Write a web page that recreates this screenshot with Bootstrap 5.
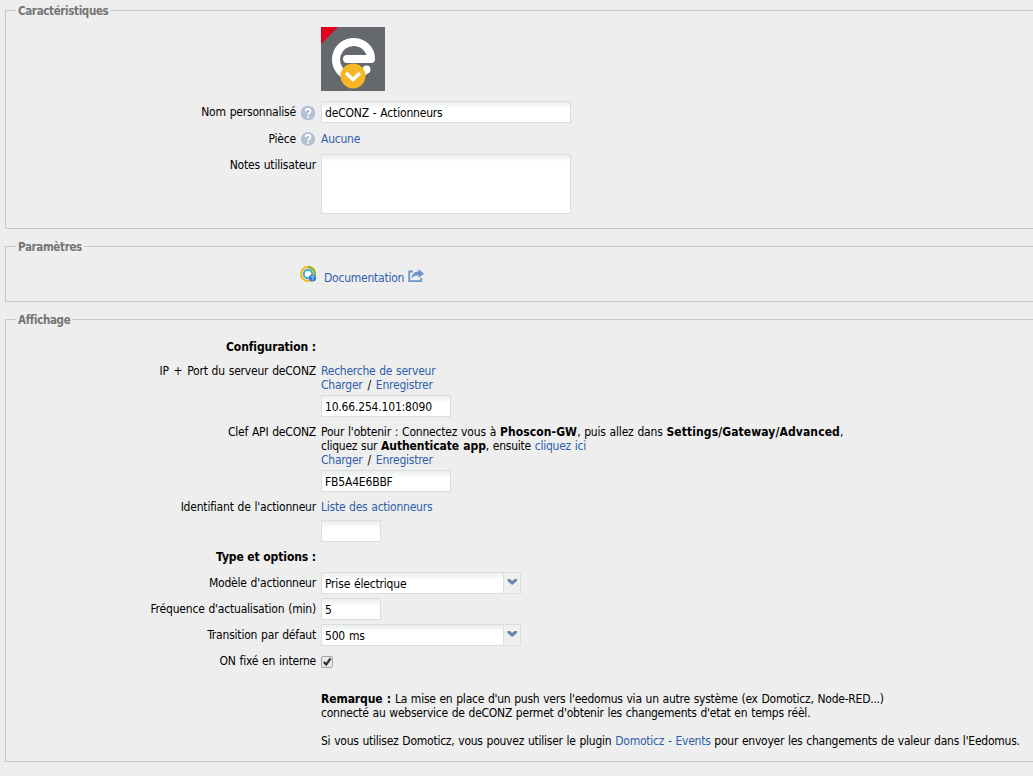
<!DOCTYPE html>
<html lang="fr">
<head>
<meta charset="utf-8">
<meta name="viewport" content="width=device-width, initial-scale=1">
<title>deCONZ - Actionneurs</title>
<link href="https://cdn.jsdelivr.net/npm/bootstrap@5.3.0/dist/css/bootstrap.min.css" rel="stylesheet">
<style>
body{background:#eee;color:#000;font-family:"DejaVu Sans Condensed","DejaVu Sans",sans-serif;font-stretch:condensed;font-size:12px;line-height:14px;letter-spacing:-.24px;word-spacing:.6px;overflow:hidden;padding:3px 0 0 5px;white-space:nowrap}
a{color:#2e5fab;text-decoration:none}
b{letter-spacing:-.08px}
.intro{letter-spacing:-.19px}
.intro b{letter-spacing:.1px}
.slash{margin:0 1.2px}
.plus{margin:0 1px}
fieldset.panel{border:1px solid #c9c9c9;margin-right:-5px}
.panel>legend{float:none;width:auto;margin:0 0 0 10px;padding:1px 2px 0;font-size:11.5px;line-height:14px;font-weight:bold;color:#757575;letter-spacing:-.35px}
.panel-1{height:226px}.panel-2{height:63px;margin-top:10px}.panel-3{height:450px;margin-top:10px}
.lab{width:310px;margin-right:5px;flex:none;text-align:right;letter-spacing:-.2px}
.lab b{letter-spacing:-.1px;word-spacing:0}
.lab.pushed{padding-top:4px}
.panel .form-control{border:1px solid #ddd;border-radius:0;height:22px;padding:2px 3px 0;font:inherit;letter-spacing:-.18px;word-spacing:inherit;color:#000;background:linear-gradient(#e9eeee,#fff 7px)}
.w250{width:250px}.w130{width:130px}.w60{width:60px}.w183{width:183px}
.panel textarea.form-control{height:60px;min-height:0;resize:none}
.trigger{width:17px;height:22px;border:1px solid #ddd;border-left:0;border-radius:0 2px 0 0;background:#efefef;padding:0;display:flex}
</style>
</head>
<body>
<fieldset class="panel panel-1">
  <legend><span>Caractéristiques</span></legend>
  <div class="d-flex" style="padding-top:9px">
    <div class="lab"></div>
    <svg width="64" height="64" viewBox="0 0 64 64"><path fill="#65696d" d="M0 0h64v64H0z"/><path fill="#e2001a" d="M0 0h17L0 17z"/><path d="M26 32H50C50 22 42 15 32.500 15A17.500 17.500 0 0 0 22 46.500" fill="none" stroke="#fff" stroke-width="8" stroke-linecap="round" stroke-linejoin="round"/><circle cx="45.500" cy="42.500" r="4" fill="#fff"/><path d="M39 49l7-6" stroke="#fff" stroke-width="6"/><circle cx="32" cy="49" r="12.500" fill="#f7b626"/><path d="M25 46l7 6.500 7-6.500" fill="none" stroke="#fff" stroke-width="3.400"/></svg>
  </div>
  <div class="d-flex" style="margin-top:10px">
    <label class="lab pushed d-flex justify-content-end"><span>Nom personnalisé</span><svg class="ms-1" width="16" height="16"><circle cx="8" cy="8" r="7.300" fill="#b3bfd3"/><path d="M5.500 6.200c0-3.200 5-3.200 5 0 0 1.700-2.300 1.700-2.300 3.500M8.200 10.700v2" fill="none" stroke="#fff" stroke-width="1.700"/></svg></label>
    <input class="form-control w250" value="deCONZ - Actionneurs">
  </div>
  <div class="d-flex" style="margin-top:9px;height:14px">
    <div class="lab d-flex justify-content-end"><span>Pièce</span><svg class="ms-1" width="16" height="16"><circle cx="8" cy="7" r="7" fill="#b3bfd3"/><path d="M5.500 5.200c0-3.200 5-3.200 5 0 0 1.700-2.300 1.700-2.300 3.500M8.200 9.700v2" fill="none" stroke="#fff" stroke-width="1.700"/></svg></div>
    <div><a href="#">Aucune</a></div>
  </div>
  <div class="d-flex" style="margin-top:8px">
    <label class="lab pushed">Notes utilisateur</label>
    <textarea class="form-control w250"></textarea>
  </div>
</fieldset>

<fieldset class="panel panel-2">
  <legend><span>Paramètres</span></legend>
  <div class="d-flex" style="padding:12px 0 0 294px">
    <svg width="16" height="17"><circle cx="8" cy="8" r="7" fill="none" stroke="#f6bb27" stroke-width="2.200"/><path d="M8 1a7 7 0 0 1 6.800 8" fill="none" stroke="#84b722" stroke-width="2.200"/><circle cx="8" cy="8" r="4.200" fill="#fff" stroke="#36afd0" stroke-width="2"/><circle cx="12.500" cy="12" r="3.600" fill="#347bd4"/><path d="M11.500 11c0-1.500 2-1.500 2 0 0 .8-1 .8-1 1.600M12.500 13.300v.9" fill="none" stroke="#dcecff" stroke-width=".9"/></svg>
    <a href="#" class="d-flex" style="padding:5px 0 0 8px"><span>Documentation</span><svg style="margin:-3px 0 0 4px" width="17" height="16"><path d="M5 3.500H1.200v9.700h12V10" fill="none" stroke="#6d94c9" stroke-width="1.800"/><path d="M3.500 10.500C4 6 6.500 3.500 10.500 3.500V1l5.500 4.700-5.500 4.300V7.300c-3 0-5 .7-7 3.200z" fill="#6d94c9"/></svg></a>
  </div>
</fieldset>

<fieldset class="panel panel-3">
  <legend><span>Affichage</span></legend>
  <div class="d-flex" style="padding-top:13px"><div class="lab"><b>Configuration :</b></div></div>
  <div class="d-flex" style="margin-top:10px">
    <label class="lab">IP <span class="plus">+</span> Port du serveur deCONZ</label>
    <div>
      <div><a href="#">Recherche de serveur</a></div>
      <div><a href="#">Charger</a> <span class="slash">/</span> <a href="#">Enregistrer</a></div>
      <input class="form-control w130" style="margin-top:3px" value="10.66.254.101:8090">
    </div>
  </div>
  <div class="d-flex" style="margin-top:8px">
    <label class="lab">Clef API deCONZ</label>
    <div>
      <div><span class="intro">Pour l'obtenir : Connectez vous à <b>Phoscon-GW</b>, puis allez dans <b>Settings/Gateway/Advanced</b>,</span></div>
      <div><span>cliquez sur <b>Authenticate app</b>, ensuite <a href="#">cliquez ici</a></span></div>
      <div><a href="#">Charger</a> <span class="slash">/</span> <a href="#">Enregistrer</a></div>
      <input class="form-control w130" style="margin-top:3px" value="FB5A4E6BBF">
    </div>
  </div>
  <div class="d-flex" style="margin-top:8px">
    <label class="lab">Identifiant de l'actionneur</label>
    <div>
      <div><a href="#">Liste des actionneurs</a></div>
      <input class="form-control w60" style="margin-top:6px" value="">
    </div>
  </div>
  <div class="d-flex" style="margin-top:8px"><div class="lab"><b>Type et options :</b></div></div>
  <div class="d-flex" style="margin-top:8px">
    <label class="lab pushed">Modèle d'actionneur</label>
    <div class="d-flex"><input class="form-control w183" value="Prise électrique"><button class="trigger" type="button"><svg width="16" height="20"><path d="M3.500 6h2.500l2.200 2L10.500 6H13v2L8.200 12 3.500 8z" fill="#6c84ab"/></svg></button></div>
  </div>
  <div class="d-flex" style="margin-top:4px">
    <label class="lab pushed">Fréquence d'actualisation (min)</label>
    <input class="form-control w60" value="5">
  </div>
  <div class="d-flex" style="margin-top:4px">
    <label class="lab pushed">Transition par défaut</label>
    <div class="d-flex"><input class="form-control w183" value="500 ms"><button class="trigger" type="button"><svg width="16" height="20"><path d="M3.500 6h2.500l2.200 2L10.500 6H13v2L8.200 12 3.500 8z" fill="#6c84ab"/></svg></button></div>
  </div>
  <div class="d-flex" style="margin-top:8px">
    <label class="lab">ON fixé en interne</label>
    <svg style="margin-top:2px" width="12" height="12"><rect x=".5" y=".5" width="11" height="11" rx="1.500" fill="#e9e9e9" stroke="#a5a5a5"/><path d="M2.800 6l2.400 2.600L9.500 2.500" fill="none" stroke="#333" stroke-width="2.200"/></svg>
  </div>
  <div class="d-flex" style="margin-top:24px">
    <div class="lab"></div>
    <div>
      <div><span><b>Remarque :</b> La mise en place d'un push vers l'eedomus via un autre système (ex Domoticz, Node-RED...)</span></div>
      <div><span>connecté au webservice de deCONZ permet d'obtenir les changements d'etat en temps réèl.</span></div>
      <div style="margin-top:14px"><span>Si vous utilisez Domoticz, vous pouvez utiliser le plugin <a href="#">Domoticz - Events</a> pour envoyer les changements de valeur dans l'Eedomus.</span></div>
    </div>
  </div>
</fieldset>
<script src="https://cdn.jsdelivr.net/npm/bootstrap@5.3.0/dist/js/bootstrap.bundle.min.js"></script>
</body>
</html>
